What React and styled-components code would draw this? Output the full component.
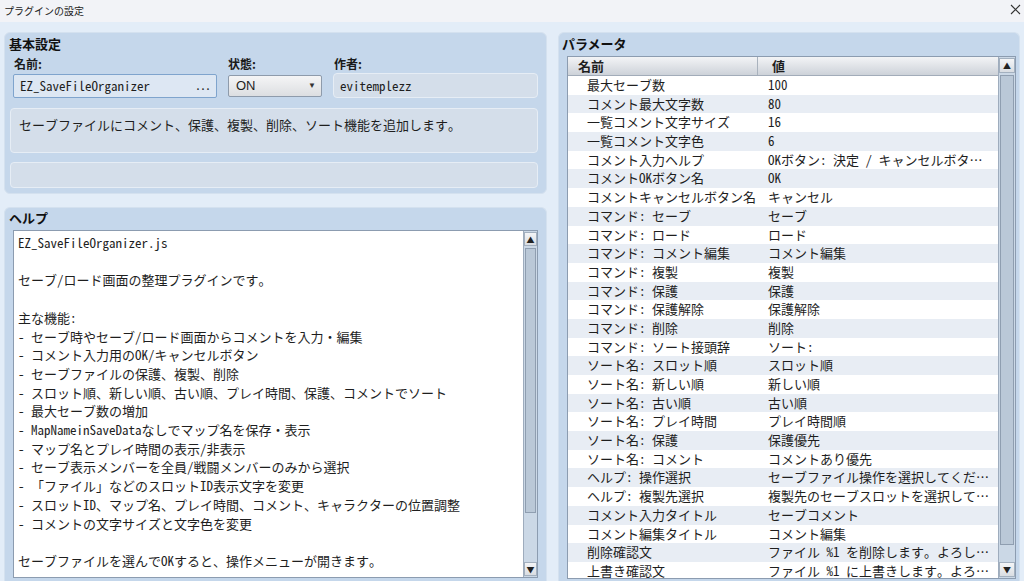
import React from "react";
import styled, { createGlobalStyle } from "styled-components";

const GlobalStyle = createGlobalStyle`
  html, body {
    margin: 0;
    padding: 0;
    overflow: hidden;
  }
  body {
    font-family: "Noto Sans CJK JP", "Noto Sans", sans-serif;
    color: #1e1e1e;
  }
`;

const TEXT_FONT = `"Noto Sans Mono CJK JP", "Noto Sans CJK JP", monospace`;

const Window = styled.div`
  width: 1024px;
  height: 581px;
  display: flex;
  flex-direction: column;
  background: #e3edf8;
  overflow: hidden;
`;

const TitleBar = styled.div`
  height: 22px;
  flex: none;
  display: flex;
  align-items: center;
  justify-content: space-between;
  padding: 0 3px 0 4px;
  background: #f2f3f7;
`;

const WindowTitle = styled.div`
  font-size: 10px;
  line-height: 12px;
  color: #222;
`;

const CloseButton = styled.div`
  width: 12px;
  height: 12px;
  display: flex;
  align-items: center;
  justify-content: center;
  margin-top: -4px;
`;

const Body = styled.div`
  height: 559px;
  flex: none;
  display: flex;
  gap: 11px;
  padding: 10px 4px 0 4px;
  box-sizing: border-box;
`;

const LeftColumn = styled.div`
  width: 543px;
  flex: none;
  display: flex;
  flex-direction: column;
  gap: 13px;
`;

const Panel = styled.div`
  background: #c5d7eb;
  border: 1px solid #d4e1ef;
  border-radius: 6px;
  display: flex;
  flex-direction: column;
  box-sizing: border-box;
  ${(p) =>
    p.$open &&
    `
    flex: 1;
    min-height: 0;
    border-bottom: none;
    border-bottom-left-radius: 0;
    border-bottom-right-radius: 0;
  `}
`;

const BasicPanel = styled(Panel)`
  height: 162px;
  flex: none;
  padding: 1px 8px 5px 4px;
`;

const HelpPanel = styled(Panel)`
  padding: 0 8px 3px 4px;
`;

const ParamPanel = styled(Panel)`
  flex: none;
  width: 462px;
  min-width: 0;
  padding: 1px 3px 2px 3px;
`;

const PanelTitle = styled.div`
  font-weight: 700;
  font-size: 13px;
  height: ${(p) => p.$h || 20}px;
  line-height: ${(p) => p.$h || 20}px;
  color: #111;
`;

const FieldGrid = styled.div`
  display: grid;
  grid-template-columns: 204px 94px 1fr;
  column-gap: 11px;
  padding-left: 4px;
  align-items: center;
`;

const LabelRow = styled(FieldGrid)`
  margin-top: 2px;
  height: 16px;
`;

const Label = styled.div`
  font-size: 12px;
  font-weight: 700;
  line-height: 16px;
  padding-left: ${(p) => p.$pad || 0}px;
  color: #1a1a1a;
`;

const FieldRow = styled(FieldGrid)`
  margin-top: 1px;
  height: 25px;
`;

const NameField = styled.div`
  height: 24px;
  box-sizing: border-box;
  border: 1px solid #7fa4cd;
  border-radius: 2px;
  background: #dde7f3;
  display: flex;
  align-items: center;
  justify-content: space-between;
  padding: 0 6px 0 6px;
  font-family: ${TEXT_FONT};
  font-size: 13px;
`;

const Dots = styled.span`
  font-size: 12px;
  letter-spacing: -1px;
  margin-top: -3px;
`;

const Select = styled.div`
  height: 22px;
  box-sizing: border-box;
  border: 1px solid #8e9bab;
  border-radius: 2px;
  background: linear-gradient(#f5f5f6, #dcdee1);
  display: flex;
  align-items: center;
  justify-content: space-between;
  padding: 0 5px 0 7px;
  font-family: "Liberation Sans", Arial, sans-serif;
  font-size: 13px;
`;

const Caret = styled.span`
  font-size: 8px;
  color: #333;
`;

const Box = styled.div`
  box-sizing: border-box;
  background: #d4deea;
  border: 1px solid #e6edf5;
  border-radius: 4px;
  font-family: ${TEXT_FONT};
  font-size: 13px;
  line-height: 19px;
  height: ${(p) => p.$h}px;
  margin-top: ${(p) => p.$mt || 0}px;
  margin-left: ${(p) => p.$ml || 0}px;
  padding: ${(p) => p.$pad || "0 6px"};
  display: flex;
  align-items: ${(p) => (p.$top ? "flex-start" : "center")};
`;

const TextArea = styled.div`
  flex: 1;
  min-height: 0;
  margin: 3px 0 0 4px;
  background: #fff;
  border: 1px solid #8c9cb0;
  display: flex;
`;

const HelpText = styled.div`
  flex: 1;
  min-width: 0;
  padding: 3px 4px;
  font-family: ${TEXT_FONT};
  font-size: 13px;
  line-height: 18.7px;
  white-space: pre;
  overflow: hidden;
`;

const Scrollbar = styled.div`
  width: ${(p) => p.$w}px;
  flex: none;
  display: flex;
  flex-direction: column;
  background: #cbd8e6;
  border-left: 1px solid #9eacbd;
  padding: 1px 0;
  box-sizing: border-box;
`;

const ArrowButton = styled.div`
  height: ${(p) => p.$h}px;
  flex: none;
  box-sizing: border-box;
  border: 1px solid #a3b0bf;
  background: linear-gradient(#f4f5f7, #d9dde2);
  display: flex;
  align-items: center;
  justify-content: center;
  font-size: 8px;
  color: #222;
`;

const Track = styled.div`
  flex: 1;
  display: flex;
  flex-direction: column;
`;

const Thumb = styled.div`
  margin: 2px 1px 0;
  box-sizing: border-box;
  border: 1px solid #8f9eb0;
  background: #bac8d7;
`;

const Table = styled.div`
  flex: 1;
  min-height: 0;
  min-width: 0;
  margin: 2px 0 0 5px;
  border: 1px solid #8c9cb0;
  display: flex;
  background: #fff;
`;

const TableMain = styled.div`
  flex: 1;
  min-width: 0;
  display: flex;
  flex-direction: column;
  overflow: hidden;
`;

const HeaderRow = styled.div`
  height: 19px;
  flex: none;
  display: flex;
  box-sizing: border-box;
  border-bottom: 1px solid #a2acb9;
  background: linear-gradient(#f3f4f6, #cdd2d9);
  font-size: 13px;
  font-weight: 700;
  line-height: 18px;
`;

const HeaderCell = styled.div`
  padding-left: ${(p) => p.$pad}px;
  ${(p) =>
    p.$first
      ? `width: 190px; box-sizing: border-box; border-right: 1px solid #a9b2bd;`
      : `flex: 1;`}
`;

const Row = styled.div`
  height: 18.7px;
  flex: none;
  display: flex;
  align-items: center;
  background: ${(p) => (p.$alt ? "#e8edf4" : "#fff")};
  font-family: ${TEXT_FONT};
  font-size: 13px;
  line-height: 18.7px;
  white-space: nowrap;
`;

const NameCell = styled.div`
  width: 190px;
  flex: none;
  box-sizing: border-box;
  padding-left: 19px;
  overflow: hidden;
`;

const ValueCell = styled.div`
  flex: 1;
  min-width: 0;
  padding: 0 4px 0 10px;
  overflow: hidden;
  text-overflow: ellipsis;
`;

const helpLines = [
  "EZ_SaveFileOrganizer.js",
  "",
  "セーブ/ロード画面の整理プラグインです。",
  "",
  "主な機能:",
  "- セーブ時やセーブ/ロード画面からコメントを入力・編集",
  "- コメント入力用のOK/キャンセルボタン",
  "- セーブファイルの保護、複製、削除",
  "- スロット順、新しい順、古い順、プレイ時間、保護、コメントでソート",
  "- 最大セーブ数の増加",
  "- MapNameinSaveDataなしでマップ名を保存・表示",
  "- マップ名とプレイ時間の表示/非表示",
  "- セーブ表示メンバーを全員/戦闘メンバーのみから選択",
  "- 「ファイル」などのスロットID表示文字を変更",
  "- スロットID、マップ名、プレイ時間、コメント、キャラクターの位置調整",
  "- コメントの文字サイズと文字色を変更",
  "",
  "セーブファイルを選んでOKすると、操作メニューが開きます。",
];

const params = [
  ["最大セーブ数", "100"],
  ["コメント最大文字数", "80"],
  ["一覧コメント文字サイズ", "16"],
  ["一覧コメント文字色", "6"],
  ["コメント入力ヘルプ", "OKボタン: 決定 / キャンセルボタン: 戻る"],
  ["コメントOKボタン名", "OK"],
  ["コメントキャンセルボタン名", "キャンセル"],
  ["コマンド: セーブ", "セーブ"],
  ["コマンド: ロード", "ロード"],
  ["コマンド: コメント編集", "コメント編集"],
  ["コマンド: 複製", "複製"],
  ["コマンド: 保護", "保護"],
  ["コマンド: 保護解除", "保護解除"],
  ["コマンド: 削除", "削除"],
  ["コマンド: ソート接頭辞", "ソート:"],
  ["ソート名: スロット順", "スロット順"],
  ["ソート名: 新しい順", "新しい順"],
  ["ソート名: 古い順", "古い順"],
  ["ソート名: プレイ時間", "プレイ時間順"],
  ["ソート名: 保護", "保護優先"],
  ["ソート名: コメント", "コメントあり優先"],
  ["ヘルプ: 操作選択", "セーブファイル操作を選択してください"],
  ["ヘルプ: 複製先選択", "複製先のセーブスロットを選択してください"],
  ["コメント入力タイトル", "セーブコメント"],
  ["コメント編集タイトル", "コメント編集"],
  ["削除確認文", "ファイル %1 を削除します。よろしいですか？"],
  ["上書き確認文", "ファイル %1 に上書きします。よろしいですか？"],
];

const ScrollBar = ({ width, arrow, thumb }) => (
  <Scrollbar $w={width}>
    <ArrowButton $h={arrow}>▲</ArrowButton>
    <Track>
      <Thumb style={{ height: thumb }} />
    </Track>
    <ArrowButton $h={arrow}>▼</ArrowButton>
  </Scrollbar>
);

const App = () => {
  return (
    <>
      <GlobalStyle />
      <Window>
        <TitleBar>
          <WindowTitle>プラグインの設定</WindowTitle>
          <CloseButton>
            <svg width="11" height="11" viewBox="0 0 11 11">
              <path d="M1 1L10 10M10 1L1 10" stroke="#333" strokeWidth="1.1" />
            </svg>
          </CloseButton>
        </TitleBar>
        <Body>
          <LeftColumn>
            <BasicPanel>
              <PanelTitle>基本設定</PanelTitle>
              <LabelRow>
                <Label $pad={1}>名前:</Label>
                <Label>状態:</Label>
                <Label $pad={1}>作者:</Label>
              </LabelRow>
              <FieldRow>
                <NameField>
                  <span>EZ_SaveFileOrganizer</span>
                  <Dots>...</Dots>
                </NameField>
                <Select>
                  <span>ON</span>
                  <Caret>▼</Caret>
                </Select>
                <Box $h={25}>evitemplezz</Box>
              </FieldRow>
              <Box $h={45} $mt={10} $ml={1} $top $pad="6px 8px 0">
                セーブファイルにコメント、保護、複製、削除、ソート機能を追加します。
              </Box>
              <Box $h={26} $mt={9} $ml={1} />
            </BasicPanel>
            <HelpPanel $open>
              <PanelTitle $h={19}>ヘルプ</PanelTitle>
              <TextArea>
                <HelpText>{helpLines.join("\n")}</HelpText>
                <ScrollBar width={14} arrow={14} thumb={265} />
              </TextArea>
            </HelpPanel>
          </LeftColumn>
          <ParamPanel $open>
            <PanelTitle>パラメータ</PanelTitle>
            <Table>
              <TableMain>
                <HeaderRow>
                  <HeaderCell $first $pad={10}>
                    名前
                  </HeaderCell>
                  <HeaderCell $pad={14}>値</HeaderCell>
                </HeaderRow>
                {params.map(([name, value], i) => (
                  <Row key={name} $alt={i % 2 === 1}>
                    <NameCell>{name}</NameCell>
                    <ValueCell>{value}</ValueCell>
                  </Row>
                ))}
              </TableMain>
              <ScrollBar width={17} arrow={15} thumb={470} />
            </Table>
          </ParamPanel>
        </Body>
      </Window>
    </>
  );
};

export default App;
